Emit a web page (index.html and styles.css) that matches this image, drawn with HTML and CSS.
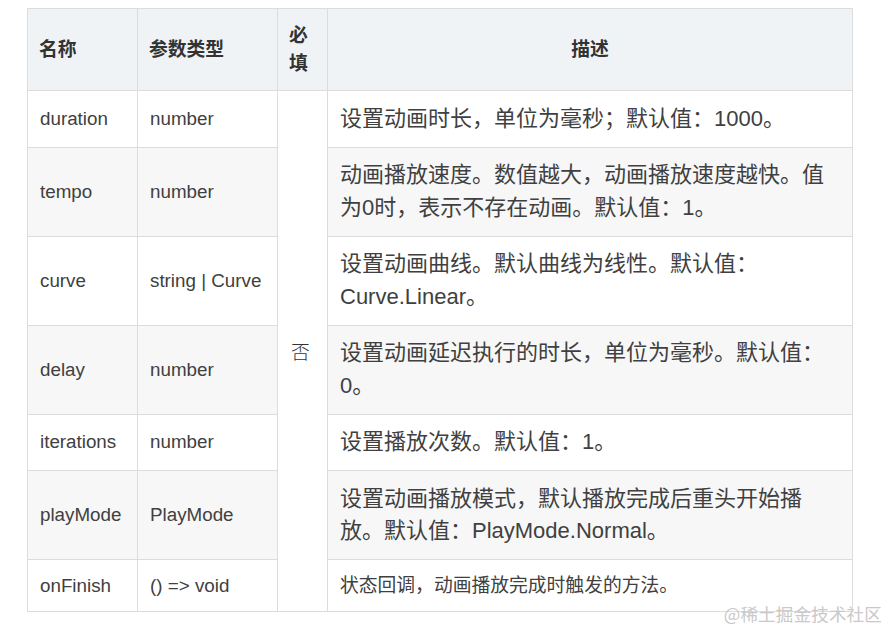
FILE: index.html
```html
<!DOCTYPE html>
<html lang="zh-CN">
<head>
<meta charset="utf-8">
<title>animation params</title>
<link rel="stylesheet" href="styles.css">
</head>
<body>
<div class="wrap">
  <table class="params">
    <colgroup>
      <col class="c-name"><col class="c-type"><col class="c-req"><col class="c-desc">
    </colgroup>
    <thead>
      <tr>
        <th>名称</th>
        <th>参数类型</th>
        <th>必填</th>
        <th class="center">描述</th>
      </tr>
    </thead>
    <tbody>
      <tr>
        <td>duration</td>
        <td>number</td>
        <td class="req" rowspan="7">否</td>
        <td><span class="big">设置动画时长，单位为毫秒；默认值：1000。</span></td>
      </tr>
      <tr class="alt">
        <td>tempo</td>
        <td>number</td>
        <td><span class="big">动画播放速度。数值越大，动画播放速度越快。值为0时，表示不存在动画。默认值：1。</span></td>
      </tr>
      <tr>
        <td>curve</td>
        <td>string | Curve</td>
        <td><span class="big">设置动画曲线。默认曲线为线性。默认值：Curve.Linear。</span></td>
      </tr>
      <tr class="alt">
        <td>delay</td>
        <td>number</td>
        <td><span class="big">设置动画延迟执行的时长，单位为毫秒。默认值：0。</span></td>
      </tr>
      <tr>
        <td>iterations</td>
        <td>number</td>
        <td><span class="big">设置播放次数。默认值：1。</span></td>
      </tr>
      <tr class="alt">
        <td>playMode</td>
        <td>PlayMode</td>
        <td><span class="big">设置动画播放模式，默认播放完成后重头开始播放。默认值：PlayMode.Normal。</span></td>
      </tr>
      <tr>
        <td>onFinish</td>
        <td>() =&gt; void</td>
        <td>状态回调，动画播放完成时触发的方法。</td>
      </tr>
    </tbody>
  </table>
</div>
<div class="watermark">@稀土掘金技术社区</div>
</body>
</html>
```
FILE: styles.css
```css
html, body {
  margin: 0;
  padding: 0;
  background: #ffffff;
}

body {
  font-family: "Liberation Sans", "Noto Sans CJK SC", sans-serif;
  font-size: 18.8px;
  line-height: 28px;
  color: #404040;
  position: relative;
  width: 889px;
  height: 632px;
  overflow: hidden;
}

.wrap {
  padding: 8px 0 0 27px;
}

.params {
  border-collapse: collapse;
  table-layout: fixed;
  width: 825px;
}

.c-name { width: 110px; }
.c-type { width: 140px; }
.c-req { width: 50px; }
.c-desc { width: 525px; }

.params th,
.params td {
  border: 1px solid #dcdcdc;
  text-align: left;
  vertical-align: middle;
}

.params th {
  background: #f0f3f5;
  color: #333333;
  font-weight: bold;
  padding: 12.5px 11px;
}

.params th.center {
  text-align: center;
}

.params td {
  padding: 11.5px 11px 11.5px 12px;
}

.params tr.alt td {
  background: #f7f7f7;
}

.params td.req {
  background: #ffffff !important;
  font-family: "Noto Sans CJK SC", sans-serif;
  font-weight: 300;
  color: #333333;
  padding-left: 13px;
}

.big {
  font-size: 22px;
  line-height: 32.5px;
}

.watermark {
  position: absolute;
  right: 7px;
  bottom: 7px;
  font-family: "Noto Sans CJK SC", sans-serif;
  font-size: 17.5px;
  line-height: 22px;
  color: #c9c9c9;
  letter-spacing: 0.2px;
}
```
